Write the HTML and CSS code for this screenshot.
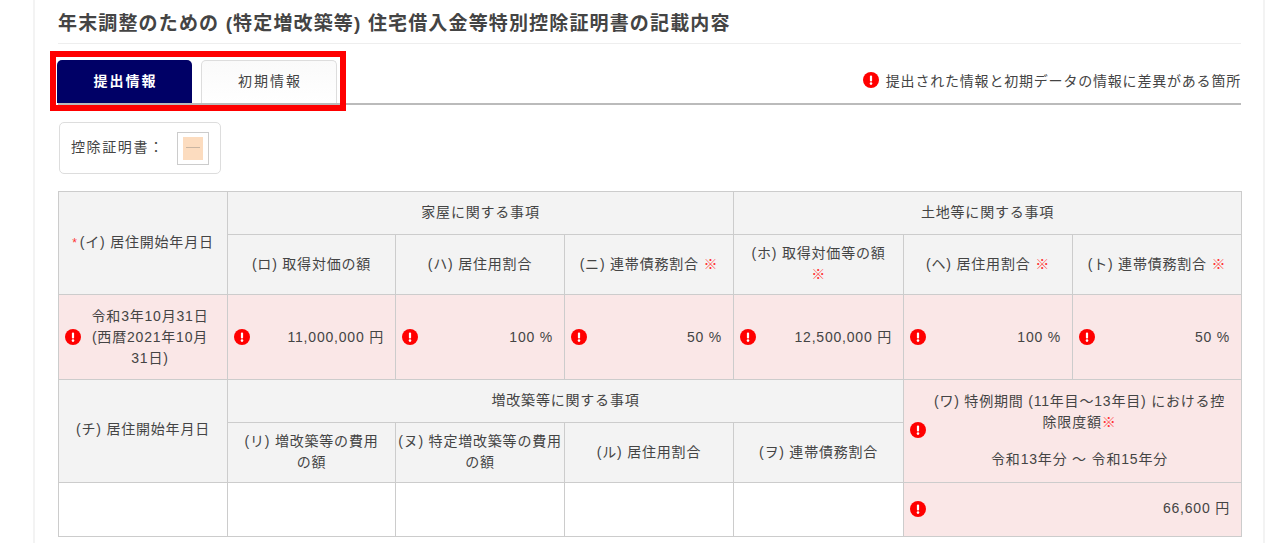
FILE: index.html
```html
<!DOCTYPE html>
<html lang="ja">
<head>
<meta charset="utf-8">
<title>記載内容</title>
<link rel="stylesheet" href="styles.css">
</head>
<body>
<svg class="defs" width="0" height="0" aria-hidden="true"><symbol id="alert" viewBox="0 0 16 16"><circle cx="8" cy="8" r="8" fill="#f00"/><rect x="6.9" y="3.4" width="2.2" height="6" rx="1" fill="#fff"/><circle cx="8" cy="11.6" r="1.3" fill="#fff"/></symbol></svg>
<main class="card">
  <h1 class="title">年末調整のための (特定増改築等) 住宅借入金等特別控除証明書の記載内容</h1>
  <div class="tabbar">
    <div class="tabs">
      <div class="tab tab-active">提出情報</div>
      <div class="tab tab-idle">初期情報</div>
    </div>
    <div class="legend"><svg class="ico"><use href="#alert"/></svg><span>提出された情報と初期データの情報に差異がある箇所</span></div>
    <div class="highlight"></div>
  </div>
  <div class="cert">
    <span>控除証明書：</span>
    <div class="thumb"><div class="thumb-page"><div class="thumb-line"></div></div></div>
  </div>
  <table class="grid">
    <colgroup><col class="c1"><col class="c2"><col class="c3"><col class="c4"><col class="c5"><col class="c6"><col class="c7"></colgroup>
    <tr class="r1">
      <th rowspan="2" class="top"><span class="req star">*</span>(イ) 居住開始年月日</th>
      <th colspan="3">家屋に関する事項</th>
      <th colspan="3">土地等に関する事項</th>
    </tr>
    <tr class="r2">
      <th>(ロ) 取得対価の額</th>
      <th>(ハ) 居住用割合</th>
      <th>(ニ) 連帯債務割合 <span class="req">※</span></th>
      <th>(ホ) 取得対価等の額<br><span class="req">※</span></th>
      <th>(ヘ) 居住用割合 <span class="req">※</span></th>
      <th>(ト) 連帯債務割合 <span class="req">※</span></th>
    </tr>
    <tr class="r3">
      <td class="diff"><div class="dcell"><svg class="ico"><use href="#alert"/></svg><span class="ctr">令和3年10月31日<br>(西暦2021年10月<br>31日)</span></div></td>
      <td class="diff"><div class="dcell"><svg class="ico"><use href="#alert"/></svg><span class="amt">11,000,000 円</span></div></td>
      <td class="diff"><div class="dcell"><svg class="ico"><use href="#alert"/></svg><span class="amt">100 %</span></div></td>
      <td class="diff"><div class="dcell"><svg class="ico"><use href="#alert"/></svg><span class="amt">50 %</span></div></td>
      <td class="diff"><div class="dcell"><svg class="ico"><use href="#alert"/></svg><span class="amt">12,500,000 円</span></div></td>
      <td class="diff"><div class="dcell"><svg class="ico"><use href="#alert"/></svg><span class="amt">100 %</span></div></td>
      <td class="diff"><div class="dcell"><svg class="ico"><use href="#alert"/></svg><span class="amt">50 %</span></div></td>
    </tr>
    <tr class="r4">
      <th rowspan="2" class="top lower">(チ) 居住開始年月日</th>
      <th colspan="4">増改築等に関する事項</th>
      <td rowspan="2" colspan="2" class="diff lift"><div class="dcell"><svg class="ico"><use href="#alert"/></svg><span class="ctr">(ワ) 特例期間 (11年目～13年目) における控<br>除限度額<span class="req">※</span><span class="period">令和13年分 ～ 令和15年分</span></span></div></td>
    </tr>
    <tr class="r5">
      <th>(リ) 増改築等の費用<br>の額</th>
      <th>(ヌ) 特定増改築等の費用<br>の額</th>
      <th>(ル) 居住用割合</th>
      <th>(ヲ) 連帯債務割合</th>
    </tr>
    <tr class="r6">
      <td></td><td></td><td></td><td></td><td></td>
      <td class="diff lift" colspan="2"><div class="dcell"><svg class="ico"><use href="#alert"/></svg><span class="amt">66,600 円</span></div></td>
    </tr>
  </table>
</main>
</body>
</html>
```
FILE: styles.css
```css
* { box-sizing: border-box; }
html, body { margin: 0; height: 543px; overflow: hidden; background: #fff; }
body {
  padding: 0 15px 0 33px;
  font-family: "Liberation Sans", "Noto Sans CJK JP", sans-serif;
  color: #444;
}
.defs { position: absolute; }
.card {
  height: 543px;
  border-left: 2px solid #f3f3f3;
  border-right: 2px solid #f3f3f3;
  padding: 0 22px 0 23px;
}
.title {
  margin: 0;
  height: 44px;
  padding-top: 12px;
  border-bottom: 1px solid #eee;
  font-size: 19px;
  line-height: 24px;
  font-weight: 700;
  color: #444;
  letter-spacing: 1.15px;
  white-space: nowrap;
}
.tabbar {
  position: relative;
  height: 61px;
  padding-top: 16px;
  border-bottom: 2px solid #bbb;
  display: flex;
  justify-content: space-between;
  align-items: flex-end;
}
.tabs { display: flex; gap: 9px; margin-left: -1px; }
.tab {
  width: 136px;
  height: 43px;
  padding-left: 2px;
  border-radius: 5px 5px 0 0;
  font-size: 14px;
  letter-spacing: 2px;
  line-height: 43px;
  text-align: center;
}
.tab-active { background: #006; color: #fff; font-weight: 700; width: 135px; }
.tab-idle { background: linear-gradient(#fafafa, #fff); border: 1px solid #ddd; border-bottom: 0; line-height: 41px; }
.legend {
  display: flex;
  align-items: center;
  gap: 7px;
  height: 43px;
  padding-bottom: 4px;
  font-size: 14px;
  letter-spacing: 0.8px;
  white-space: nowrap;
}
.highlight {
  position: absolute;
  left: -8px;
  top: 7px;
  width: 296px;
  height: 60px;
  border: 6px solid #f00;
}
.ico { width: 16px; height: 16px; flex: none; display: block; }
.cert {
  width: 162px;
  height: 52px;
  margin: 17px 0 17px 1px;
  border: 1px solid #ddd;
  border-radius: 5px;
  padding: 0 11px 4px;
  display: flex;
  align-items: center;
  justify-content: space-between;
  font-size: 14px;
  letter-spacing: 1.6px;
  white-space: nowrap;
}
.thumb {
  width: 32px;
  height: 33px;
  margin-top: 4px;
  border: 1px solid #ccc;
  padding: 4px 5px;
  background: #fff;
  flex: none;
}
.thumb-page { height: 100%; background: #fcdcbf; padding-top: 10px; }
.thumb-line { height: 1px; margin: 0 3px; background: #c9b5a2; }
.grid {
  width: 1184px;
  table-layout: fixed;
  border-collapse: collapse;
  font-size: 14px;
  letter-spacing: 0.8px;
  line-height: 21px;
}
.c1 { width: 169px; }
.c2 { width: 168px; }
.c3, .c4 { width: 169px; }
.c5 { width: 170px; }
.c6, .c7 { width: 169px; }
th, td { border: 1px solid #ccc; padding: 0 2px; text-align: center; font-weight: 400; }
th { background: #f3f3f3; padding-bottom: 1px; }
td { background: #fff; }
th.top { vertical-align: middle; padding-bottom: 0; }
th.lower { padding-bottom: 3px; }
td.diff { background: #fae7e7; padding: 0 6px; }
td.lift { padding-bottom: 2px; }
.r1, .r4 { height: 43px; }
.r2, .r5 { height: 60px; }
.r3 { height: 85px; }
.r6 { height: 54px; }
.req { color: #f33; }
.star { font-size: 12px; margin-right: 2px; }
.dcell { display: flex; align-items: center; gap: 6px; }
.ctr { flex: 1; text-align: center; padding-right: 8px; }
.amt { flex: 1; text-align: right; padding-right: 5px; }
.period { display: block; margin-top: 16px; }
```
